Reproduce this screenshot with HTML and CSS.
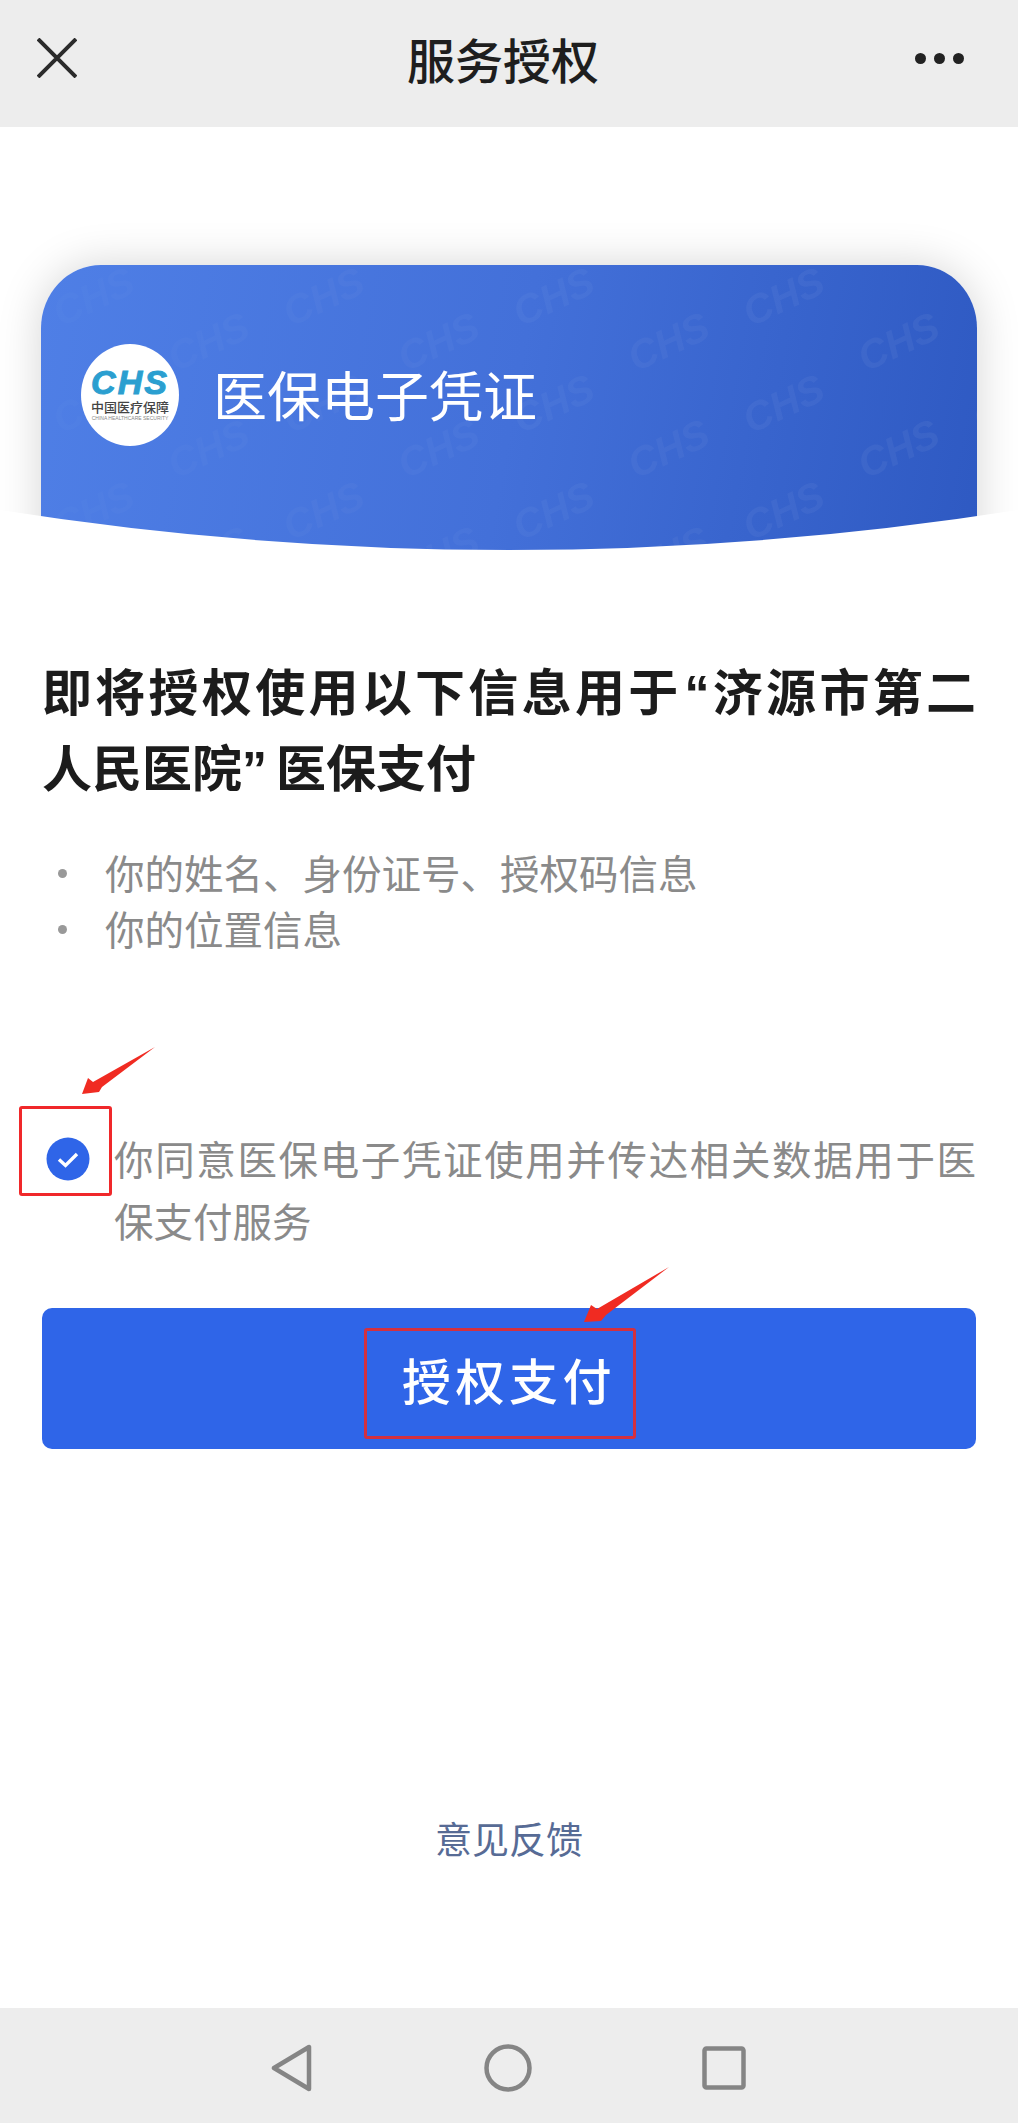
FILE: index.html
```html
<!DOCTYPE html>
<html lang="zh-CN">
<head>
    <meta charset="UTF-8">
    <meta name="viewport" content="width=device-width, initial-scale=1.0">
    <title>服务授权</title>
    <link rel="stylesheet" href="styles.css">
</head>
<body>
    <div class="pagina">
        <header class="topo">
            <svg class="icone-fechar" width="40" height="40" viewBox="0 0 40 40">
                <path d="M1 1 L39 39 M39 1 L1 39" stroke="#2b2b2b" stroke-width="4" fill="none"/>
            </svg>
            <h1 class="topo-titulo">服务授权</h1>
            <div class="topo-mais">
                <span class="ponto"></span>
                <span class="ponto"></span>
                <span class="ponto"></span>
            </div>
        </header>

        <main class="conteudo">
            <section class="hero">
                <div class="cartao">
                    <svg class="marca-agua" width="100%" height="100%">
                        <defs>
                            <pattern id="chs" width="230" height="107" patternUnits="userSpaceOnUse">
                                <text transform="translate(20 62) rotate(-25)" class="marca-texto">CHS</text>
                                <text transform="translate(135 107) rotate(-25)" class="marca-texto">CHS</text>
                            </pattern>
                        </defs>
                        <rect width="100%" height="100%" fill="url(#chs)"/>
                    </svg>
                    <div class="logo">
                        <span class="logo-chs">CHS</span>
                        <span class="logo-nome">中国医疗保障</span>
                        <span class="logo-en">CHINA HEALTHCARE SECURITY</span>
                    </div>
                    <span class="cartao-titulo">医保电子凭证</span>
                </div>
                <svg class="curva" width="1018" height="80" viewBox="0 0 1018 80" preserveAspectRatio="none">
                    <path d="M0 0 Q509 80 1018 0 L1018 80 L0 80 Z" fill="#fff"/>
                </svg>
            </section>

            <h2 class="aviso">
                <span class="linha linha-cheia">即将授权使用以下信息用于<span class="aspa-abre">“</span>济源市第二</span>
                <span class="linha">人民医院<span class="aspa-fecha">”</span>医保支付</span>
            </h2>

            <ul class="lista">
                <li>你的姓名、身份证号、授权码信息</li>
                <li>你的位置信息</li>
            </ul>

            <div class="acordo">
                <svg class="check" width="44" height="44" viewBox="0 0 44 44">
                    <circle cx="22" cy="22" r="21.5" fill="#2f65e8"/>
                    <path d="M13 22.5 L19.5 28.5 L31 17" stroke="#fff" stroke-width="3.4" fill="none"/>
                </svg>
                <p class="acordo-texto">你同意医保电子凭证使用并传达相关数据用于医保支付服务</p>
            </div>

            <button class="btn-autorizar">授权支付</button>

            <a class="feedback">意见反馈</a>
        </main>

        <footer class="rodape">
            <svg width="42" height="48" viewBox="0 0 42 48">
                <path d="M38 3 L38 45 L3 24 Z" stroke="#858585" stroke-width="4.5" stroke-linejoin="round" fill="none"/>
            </svg>
            <svg width="48" height="48" viewBox="0 0 48 48">
                <circle cx="24" cy="24" r="21.5" stroke="#858585" stroke-width="4.5" fill="none"/>
            </svg>
            <svg width="44" height="44" viewBox="0 0 44 44">
                <rect x="2.5" y="2.5" width="39" height="39" rx="2" stroke="#858585" stroke-width="4.5" fill="none"/>
            </svg>
        </footer>

        <!-- marcacoes vermelhas por cima da captura -->
        <div class="marca-caixa marca-check"></div>
        <div class="marca-caixa marca-botao"></div>
        <svg class="seta seta-check" width="80" height="54" viewBox="0 0 80 54">
            <path d="M76 1 L14 36 L9 32 L3 48 L20 46 L23 41 Z" fill="#f02b22"/>
        </svg>
        <svg class="seta seta-botao" width="92" height="62" viewBox="0 0 92 62">
            <path d="M88 1 L16 43 L10 39 L3 56 L20 55 L25 49 Z" fill="#f02b22"/>
        </svg>
    </div>
</body>
</html>
```

FILE: styles.css
```css
* {
    padding: 0;
    margin: 0;
    border: none;
    box-sizing: border-box;
}
body {
    background-color: #fff;
    font-family: "Noto Sans CJK SC", "Liberation Sans", sans-serif;
}
.pagina {
    position: relative;
    display: flex;
    flex-direction: column;
    width: 1018px;
    height: 2123px;
    overflow: hidden;
}

/* topo */
.topo {
    display: flex;
    justify-content: space-between;
    align-items: center;
    flex-shrink: 0;
    height: 127px;
    padding: 0 54px 12px 37px;
    background-color: #ededed;
}
.topo-titulo {
    margin-left: 14px;
    font-size: 48px;
    font-weight: 500;
    line-height: 60px;
    color: #1e1e1e;
}
.topo-mais {
    display: flex;
    gap: 8px;
    padding-top: 1px;
}
.ponto {
    width: 11px;
    height: 11px;
    border-radius: 50%;
    background-color: #222;
}

/* cartao azul */
.conteudo {
    display: flex;
    flex-direction: column;
    flex: 1;
    padding: 0 42px;
}
.hero {
    position: relative;
    flex-shrink: 0;
    height: 463px;
    margin: 0 -42px;
    padding: 138px 41px 0 41px;
    overflow: hidden;
}
.cartao {
    position: relative;
    display: flex;
    align-items: center;
    gap: 34px;
    height: 325px;
    padding: 0 0 65px 40px;
    border-radius: 60px 60px 0 0 / 63px 63px 0 0;
    background: linear-gradient(100deg, #4f7fe6 0%, #4370d9 50%, #2e59c2 100%);
    box-shadow: 0 0 44px rgba(0, 0, 0, 0.17);
}
.marca-agua {
    position: absolute;
    top: 0;
    left: 0;
    border-radius: 60px 60px 0 0 / 63px 63px 0 0;
    -webkit-mask-image: linear-gradient(to right, rgba(0, 0, 0, 0.3), #000);
    mask-image: linear-gradient(to right, rgba(0, 0, 0, 0.3), #000);
}
.marca-texto {
    font-family: "Liberation Sans", sans-serif;
    font-size: 40px;
    font-weight: bold;
    font-style: italic;
    fill: #fff;
    fill-opacity: 0.05;
}
.logo {
    position: relative;
    display: flex;
    flex-direction: column;
    align-items: center;
    flex-shrink: 0;
    width: 98px;
    height: 102px;
    padding-top: 22px;
    border-radius: 50%;
    background-color: #fff;
}
.logo-chs {
    font-family: "Liberation Sans", sans-serif;
    font-size: 34px;
    font-weight: bold;
    font-style: italic;
    line-height: 32px;
    letter-spacing: 2px;
    color: #2b9fd0;
    -webkit-text-stroke: 1px #2b9fd0;
}
.logo-nome {
    font-size: 13px;
    font-weight: 500;
    line-height: 17px;
    color: #444;
}
.logo-en {
    font-family: "Liberation Sans", sans-serif;
    font-size: 5px;
    line-height: 7px;
    white-space: nowrap;
    color: #888;
}
.cartao-titulo {
    position: relative;
    margin-bottom: 3px;
    font-size: 54px;
    line-height: 70px;
    color: #fff;
}
.curva {
    position: absolute;
    left: 0;
    bottom: 0;
    height: 80px;
}

/* textos */
.aviso {
    margin-top: 61px;
    font-size: 50px;
    font-weight: bold;
    color: #1c1c1c;
}
.linha {
    display: block;
    height: 76px;
    line-height: 76px;
    overflow: hidden;
}
.linha-cheia {
    text-align: justify;
    text-align-last: justify;
}
.aspa-abre,
.aspa-fecha {
    font-family: "Liberation Sans", sans-serif;
}
.aspa-abre {
    padding-left: 3px;
}
.aspa-fecha {
    padding-right: 9px;
}
.lista {
    margin-top: 41px;
    padding-left: 63px;
    font-size: 39.5px;
    line-height: 56px;
    color: #8a8a8a;
    list-style: none;
}
.lista li {
    position: relative;
}
.lista li::before {
    content: "";
    position: absolute;
    top: 25px;
    left: -47px;
    width: 9px;
    height: 9px;
    border-radius: 50%;
    background-color: #999;
}
.acordo {
    display: flex;
    align-items: flex-start;
    gap: 24px;
    margin: 171px 0 0 4px;
}
.check {
    flex-shrink: 0;
    margin-top: 10px;
}
.acordo-texto {
    font-size: 39.5px;
    line-height: 62px;
    text-align: justify;
    color: #8a8a8a;
}
.btn-autorizar {
    flex-shrink: 0;
    width: 934px;
    height: 141px;
    margin-top: 57px;
    border-radius: 10px;
    background-color: #2f65e8;
    font-family: inherit;
    font-size: 49px;
    font-weight: 500;
    letter-spacing: 4.5px;
    color: #fff;
}
.feedback {
    align-self: center;
    margin-top: 361px;
    font-size: 37px;
    line-height: 56px;
    color: #576b95;
}

/* barra de baixo */
.rodape {
    display: flex;
    justify-content: space-between;
    align-items: center;
    flex-shrink: 0;
    height: 115px;
    padding: 4px 272px 0 271px;
    background-color: #ededed;
}

/* marcacoes */
.marca-caixa {
    position: absolute;
    border: 3px solid #f0282a;
    border-radius: 3px;
}
.marca-check {
    top: 1106px;
    left: 19px;
    width: 93px;
    height: 90px;
}
.marca-botao {
    top: 1328px;
    left: 364px;
    width: 272px;
    height: 111px;
    border-color: #d4303f;
}
.seta {
    position: absolute;
}
.seta-check {
    top: 1046px;
    left: 79px;
}
.seta-botao {
    top: 1266px;
    left: 581px;
}
```
